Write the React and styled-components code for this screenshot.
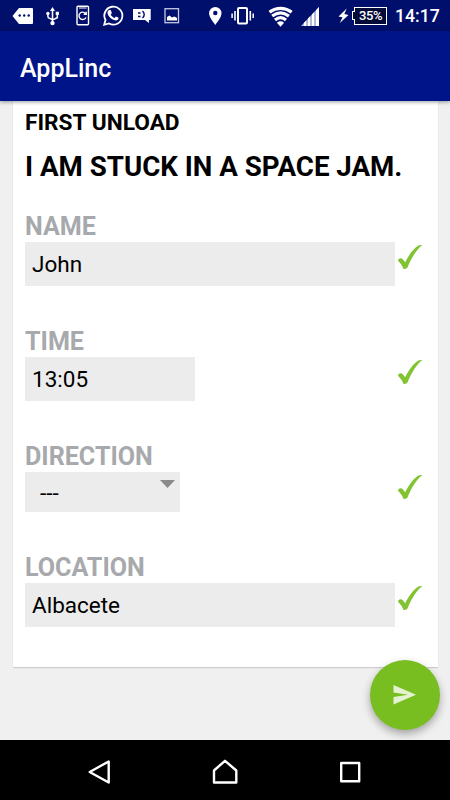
import React from "react";
import styled, { createGlobalStyle } from "styled-components";

const GlobalStyle = createGlobalStyle`
  *, *::before, *::after { box-sizing: border-box; }
  body { margin: 0; font-family: Roboto, "Noto Sans", sans-serif; background: #f0f0f0; }
`;

const Screen = styled.div`
  position: relative;
  display: flex;
  flex-direction: column;
  width: 450px;
  height: 800px;
  overflow: hidden;
  background: #f0f0f0;
`;

const StatusBar = styled.header`
  flex: none;
  display: flex;
  align-items: flex-start;
  height: 31px;
  background: #000f6b;
  color: #fff;
`;

const StatusIcon = styled.svg`
  flex: none;
  display: block;
  width: ${(p) => p.$w}px;
  height: 31px;
  margin-left: ${(p) => p.$gap}px;
`;

const Battery = styled.div`
  position: relative;
  flex: none;
  width: 33px;
  height: 18px;
  margin: 7px 0 0 5px;
  border: 1px solid #fff;
  background: #050b38;
  font-size: 13px;
  font-weight: 500;
  line-height: 16px;
  text-align: center;
  letter-spacing: -0.4px;

  &::before {
    content: "";
    position: absolute;
    left: -3px;
    top: 3px;
    width: 3px;
    height: 9px;
    border: 1px solid #fff;
    border-right: 0;
    background: #050b38;
  }
`;

const Clock = styled.time`
  margin-left: 8px;
  font-size: 17.7px;
  font-weight: 500;
  line-height: 33px;
`;

const AppBar = styled.div`
  position: relative;
  z-index: 1;
  flex: none;
  display: flex;
  align-items: center;
  height: 70px;
  padding-left: 20px;
  background: #001489;
  color: #fff;
  box-shadow: 0 1px 4px rgba(0, 0, 0, 0.4);
`;

const AppTitle = styled.h1`
  margin: 5px 0 0;
  font-size: 25px;
  font-weight: 500;
  line-height: 30px;
`;

const Content = styled.main`
  flex: 1;
  padding: 0 12.5px;
`;

const Card = styled.section`
  height: 566px;
  padding: 8px 12px 0 12.5px;
  background: #fff;
  box-shadow: 0 1px 1px rgba(0, 0, 0, 0.15);
`;

const Section = styled.h2`
  margin: 0;
  font-size: 22.7px;
  font-weight: 700;
  line-height: 28px;
`;

const Headline = styled.h3`
  margin: 13px 0 0;
  font-size: 27.7px;
  font-weight: 700;
  line-height: 34px;
  white-space: nowrap;
`;

const Form = styled.form`
  display: flex;
  flex-direction: column;
  gap: 42px;
  margin-top: 29px;
`;

const Field = styled.div`
  display: flex;
  flex-direction: column;
`;

const Label = styled.span`
  height: 29px;
  font-size: 25.1px;
  font-weight: 700;
  line-height: 28px;
  color: #a7a9ac;
`;

const FieldRow = styled.div`
  display: flex;
  justify-content: space-between;
`;

const Box = styled.div`
  width: ${(p) => p.$w}px;
  height: 44px;
  padding-left: 7px;
  background: #ececec;
  color: #000;
  font-size: 22.5px;
  line-height: 44px;
`;

const Select = styled(Box)`
  display: flex;
  justify-content: space-between;
  height: 40px;
  padding: 0 5px 0 15px;
  line-height: 42px;
`;

const Arrow = styled.svg`
  width: 15px;
  height: 8px;
  margin-top: 8px;
`;

const CheckIcon = styled.svg`
  width: 26px;
  height: 28px;
  margin: 2px 3px 0 0;
`;

const Fab = styled.button`
  position: absolute;
  z-index: 1;
  left: 370px;
  top: 660px;
  width: 70px;
  height: 70px;
  padding: 0;
  border: 0;
  border-radius: 50%;
  background: #78be20;
  box-shadow: 0 4px 8px rgba(0, 0, 0, 0.32);
`;

const FabIcon = styled.svg`
  display: block;
  width: 70px;
  height: 70px;
`;

const NavBar = styled.nav`
  position: relative;
  z-index: 2;
  flex: none;
  display: flex;
  justify-content: center;
  gap: 95px;
  height: 60px;
  padding-top: 17px;
  background: #000;
`;

const NavIcon = styled.svg`
  width: 30px;
  height: 30px;
  fill: none;
  stroke: #fff;
  stroke-width: 2.4;
  stroke-linejoin: round;
`;

function Check() {
  return (
    <CheckIcon viewBox="0 0 26 28">
      <path
        d="M1.3 15.6C2.6 13.9 4.7 14 5.8 15.3L8.2 18.3C11.6 11 16.8 4.4 21.4 1.6C22.6 1 24 .9 25.4 1.1C19.8 5.3 14.7 13.6 11.2 21.8C10.6 24.4 9.2 25 6.5 24.9C5.2 21.5 3.4 19.2 1.7 17.5C1.1 16.9 .9 16.2 1.3 15.6Z"
        fill="#82c332"
      />
    </CheckIcon>
  );
}

function FormField({ label, children }) {
  return (
    <Field>
      <Label>{label}</Label>
      <FieldRow>
        {children}
        <Check />
      </FieldRow>
    </Field>
  );
}

function StatusIcons() {
  return (
    <>
      <StatusIcon $w={22} $gap={12} viewBox="0 0 22 31">
        <path d="M7 8H20Q21 8 21 9V23Q21 24 20 24H7L.5 16Z" fill="#fff" />
        <g fill="#000f6b"><circle cx="7.7" cy="15.5" r="1.2" /><circle cx="12.2" cy="15.5" r="1.2" /><circle cx="16.7" cy="15.5" r="1.2" /></g>
      </StatusIcon>
      <StatusIcon $w={14} $gap={12} viewBox="0 0 14 31" fill="none" stroke="#fff" strokeWidth="1.5">
        <path d="M6.5 9V23M1.9 14V16.2Q1.9 18 3.5 18.2L6.5 20L11.3 17.8V13.5" />
        <path d="M4 11L6.5 7L9 11ZM9.7 11.7H12.9V15H9.7Z" fill="#fff" stroke="none" />
        <circle cx="1.9" cy="13.5" r="1.7" fill="#fff" stroke="none" />
        <circle cx="6.5" cy="23.1" r="2.2" fill="#fff" stroke="none" />
      </StatusIcon>
      <StatusIcon $w={14} $gap={16} viewBox="0 0 14 31" fill="none" stroke="#fff" strokeWidth="1.4">
        <rect x="1" y="6.3" width="11.5" height="18.5" rx="1" />
        <path d="M3 8H10.5" strokeWidth="1" />
        <path d="M9.5 13.4A3.7 3.7 0 1 0 10 17.5M10.2 11.7V14.2H7.7" />
      </StatusIcon>
      <StatusIcon $w={22} $gap={12} viewBox="0 0 22 31">
        <path d="M2.2 24.8L3.5 20A9 9 0 1 1 7 23.5Z" fill="none" stroke="#fff" strokeWidth="1.8" />
        <path d="M7.2 10.1H8.7L9.9 13L8.7 14.5C9.6 16.2 10.8 17.3 12.5 18L14 16.4L16.6 17.7C16.6 20 14.7 20.8 12.8 20.3C9.2 19.3 6.1 16.3 5.5 13C5.3 11.7 6.1 10.6 7.2 10.1Z" fill="#fff" />
      </StatusIcon>
      <StatusIcon $w={19} $gap={8} viewBox="0 0 19 31">
        <path d="M1 9H18.7V20H17V23L13 20H1Z" fill="#fff" />
        <path d="M6 13H8.5M6 16.5H8.5M10.5 11Q14 14.5 10.5 18" fill="none" stroke="#000f6b" strokeWidth="1.4" />
      </StatusIcon>
      <StatusIcon $w={16} $gap={13} viewBox="0 0 16 31">
        <rect x="1" y="8.7" width="13.5" height="14" fill="none" stroke="#c5c9df" strokeWidth="1.3" />
        <path d="M3 20.5V17L5.5 15.5L8 17.5L10.5 16.5L13 18V20.5Z" fill="#fff" />
      </StatusIcon>
      <StatusIcon $w={14} $gap={28} viewBox="0 0 14 31">
        <path d="M7.3 25C4.9 21.4 1.1 17.4 1.1 13.1A6.2 6.2 0 0 1 13.5 13.1C13.5 17.4 9.7 21.4 7.3 25ZM7.3 10.8A2.2 2.2 0 1 0 7.3 15.2A2.2 2.2 0 1 0 7.3 10.8Z" fill="#fff" fillRule="evenodd" />
      </StatusIcon>
      <StatusIcon $w={24} $gap={9} viewBox="0 0 24 31" fill="none" stroke="#fff">
        <rect x="7" y="8" width="9" height="15.5" rx="1" strokeWidth="2" />
        <path d="M4 11V20.5M19.3 11V20.5" strokeWidth="1.6" />
        <path d="M1.1 13.5V18M22.2 13.5V18" strokeWidth="1.5" />
      </StatusIcon>
      <StatusIcon $w={26} $gap={13} viewBox="0 0 26 31" fill="none" stroke="#fff" strokeWidth="3.2">
        <path d="M1.5 12.1Q12.5 4.6 23.7 12.1M4.2 16.1Q12.5 9.8 20.9 16.1M7 20Q12.5 15.4 18 20" />
        <path d="M12.5 26.8L8.9 22.7Q12.5 19.8 16.1 22.7Z" fill="#fff" stroke="none" />
      </StatusIcon>
      <StatusIcon $w={20} $gap={7} viewBox="0 0 20 31">
        <path d="M0 26L18 7V26Z" fill="#b4b9d7" />
        <path d="M3 22.8V26H5V20.7ZM7 18.6V26H9V16.5ZM11 14.4V26H13V12.3ZM15 10.2V26H18V7Z" fill="#fff" />
      </StatusIcon>
      <StatusIcon $w={11} $gap={17} viewBox="0 0 11 31">
        <path d="M8.7 8.5L.5 16.4L4.5 17.3L1.8 23L10.5 15.1L6.3 14.1Z" fill="#fff" />
      </StatusIcon>
    </>
  );
}

export default function App() {
  return (
    <>
      <GlobalStyle />
      <Screen>
        <StatusBar>
          <StatusIcons />
          <Battery>35%</Battery>
          <Clock>14:17</Clock>
        </StatusBar>
        <AppBar>
          <AppTitle>AppLinc</AppTitle>
        </AppBar>
        <Content>
          <Card>
            <Section>FIRST UNLOAD</Section>
            <Headline>I AM STUCK IN A SPACE JAM.</Headline>
            <Form>
              <FormField label="NAME">
                <Box $w={370}>John</Box>
              </FormField>
              <FormField label="TIME">
                <Box $w={170}>13:05</Box>
              </FormField>
              <FormField label="DIRECTION">
                <Select $w={155}>
                  ---
                  <Arrow viewBox="0 0 15 8">
                    <path d="M0 0H15L7.5 8Z" fill="#8a8a8a" />
                  </Arrow>
                </Select>
              </FormField>
              <FormField label="LOCATION">
                <Box $w={370}>Albacete</Box>
              </FormField>
            </Form>
          </Card>
        </Content>
        <Fab type="button" aria-label="Send">
          <FabIcon viewBox="0 0 70 70">
            <path d="M23.5 25L46 34.7L23.5 44.5V37L38 34.7L23.5 32.5Z" fill="#e4f2d2" />
          </FabIcon>
        </Fab>
        <NavBar>
          <NavIcon viewBox="0 0 30 30"><path d="M4.7 15L23.7 4.5V25.5Z" /></NavIcon>
          <NavIcon viewBox="0 0 30 30"><path d="M4 13.5L15 3.8L26.3 13.5V25.5H4Z" /></NavIcon>
          <NavIcon viewBox="0 0 30 30"><path d="M6.2 6H24.2V24.2H6.2Z" /></NavIcon>
        </NavBar>
      </Screen>
    </>
  );
}
